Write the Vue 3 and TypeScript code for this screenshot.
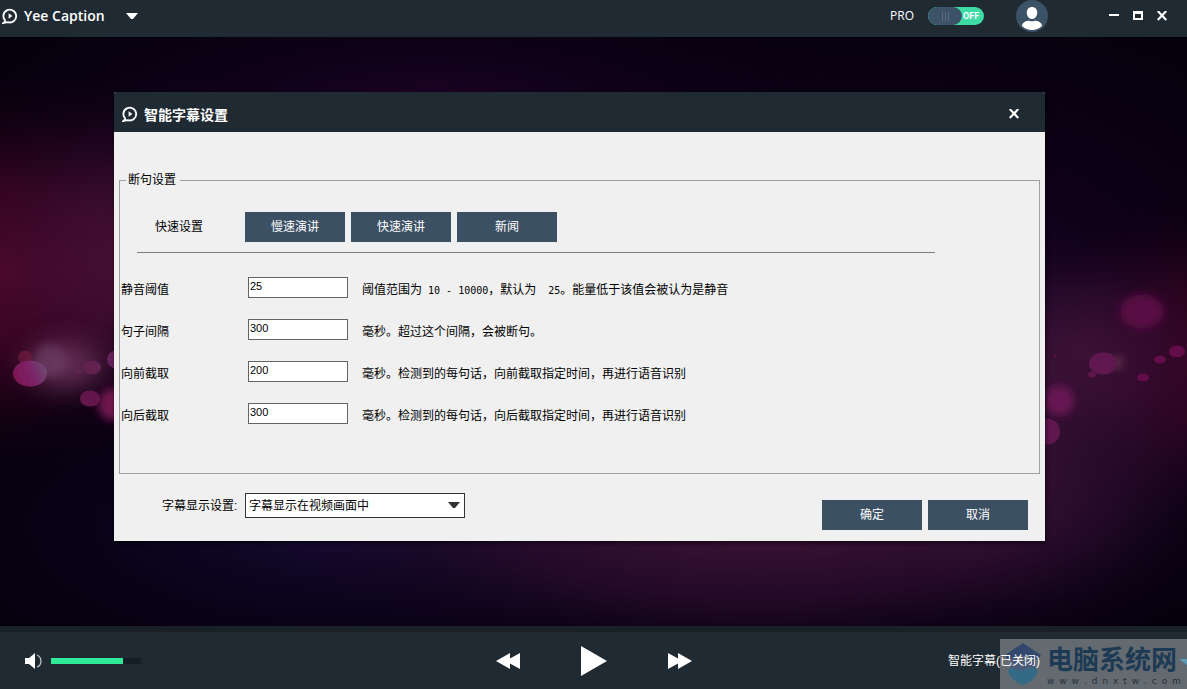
<script setup lang="ts">
import { ref } from 'vue'

interface Part {
  text: string
  mono?: boolean
}

interface Setting {
  id: string
  label: string
  value: string
  hint: Part[]
}

const presets = ['慢速演讲', '快速演讲', '新闻']

const settings = ref<Setting[]>([
  {
    id: 'silence',
    label: '静音阈值',
    value: '25',
    hint: [
      { text: '阈值范围为' },
      { text: ' 10 - 10000', mono: true },
      { text: '，默认为' },
      { text: '  25', mono: true },
      { text: '。能量低于该值会被认为是静音' },
    ],
  },
  { id: 'gap', label: '句子间隔', value: '300', hint: [{ text: '毫秒。超过这个间隔，会被断句。' }] },
  {
    id: 'before',
    label: '向前截取',
    value: '200',
    hint: [{ text: '毫秒。检测到的每句话，向前截取指定时间，再进行语音识别' }],
  },
  {
    id: 'after',
    label: '向后截取',
    value: '300',
    hint: [{ text: '毫秒。检测到的每句话，向后截取指定时间，再进行语音识别' }],
  },
])

const volume = ref(80)
const pro = ref(false)
const siteLetters = 'www.dnxtw.com'.split('')
</script>

<template>
  <div class="app">
    <header class="topbar">
      <svg class="logo" viewBox="0 0 16 16" aria-hidden="true">
        <path d="M3.6 12.9A6.4 6.4 0 1 1 6 14.2L1.4 15 3.6 12.9" />
        <path class="solid" d="M6.6 5.3 10.4 8l-3.8 2.7z" />
      </svg>
      <h1>Yee Caption</h1>
      <button class="bare menu" type="button" aria-label="Menu">
        <svg width="12" height="6" viewBox="0 0 12 6"><path d="M0 0h12L7 6H5z" fill="#fff" /></svg>
      </button>
      <label class="pro">
        <span>PRO</span>
        <span class="switch">
          <input v-model="pro" type="checkbox" role="switch" />
          <span class="knob"><i></i><i></i><i></i></span>
          <span class="state">OFF</span>
        </span>
      </label>
      <button class="bare avatar" type="button" aria-label="Account">
        <svg width="32" height="32" viewBox="0 0 32 32">
          <circle cx="16" cy="16" r="16" fill="#3c5267" />
          <path d="M16 7c3.400 0 5.200 2.400 5.200 5.500 0 3.600-2.100 6.500-5.200 6.500s-5.200-2.900-5.200-6.500c0-3.100 1.800-5.500 5.200-5.500z" fill="#fff" />
          <path d="M6 26c0-3.200 3.500-5.300 7-5.300 1.900.8 4.100.8 6 0 3.500 0 7 2.100 7 5.300-2.700 2.800-6.100 4-10 4s-7.300-1.200-10-4z" fill="#fff" />
        </svg>
      </button>
      <div class="window-buttons">
        <button class="bare" type="button" aria-label="Minimize">
          <svg width="10" height="10" viewBox="0 0 10 10"><path d="M0 3h10v2H0z" fill="#fff" /></svg>
        </button>
        <button class="bare" type="button" aria-label="Maximize">
          <svg width="10" height="10" viewBox="0 0 10 10"><path d="M0 0h10v9H0zM2 3v4h6V3z" fill="#fff" fill-rule="evenodd" /></svg>
        </button>
        <button class="bare" type="button" aria-label="Close">
          <svg width="10" height="10" viewBox="0 0 10 10"><path d="M.7 0l8.600 9M9.300 0L.7 9" stroke="#fff" stroke-width="2.200" /></svg>
        </button>
      </div>
    </header>

    <main class="stage">
      <svg class="backdrop" viewBox="0 0 1187 590" preserveAspectRatio="xMidYMid slice" aria-hidden="true">
        <defs>
          <radialGradient id="crimson"><stop offset="0" stop-color="#50082c" /><stop offset=".4" stop-color="#480628" stop-opacity=".75" /><stop offset=".75" stop-color="#340420" stop-opacity=".25" /><stop offset="1" stop-color="#200010" stop-opacity="0" /></radialGradient>
          <radialGradient id="plum"><stop offset="0" stop-color="#541c44" /><stop offset=".5" stop-color="#3c123a" stop-opacity=".65" /><stop offset=".8" stop-color="#260a2c" stop-opacity=".2" /><stop offset="1" stop-color="#1a0628" stop-opacity="0" /></radialGradient>
          <radialGradient id="indigo"><stop offset="0" stop-color="#160a34" /><stop offset="1" stop-color="#0a0418" stop-opacity="0" /></radialGradient>
          <radialGradient id="haze"><stop offset="0" stop-color="#20042a" /><stop offset="1" stop-color="#0c0014" stop-opacity="0" /></radialGradient>
          <linearGradient id="bubble" x1="0" y1=".6" x2="1" y2=".3"><stop offset="0" stop-color="#7c1450" /><stop offset=".55" stop-color="#7c2468" /><stop offset="1" stop-color="#6c4c70" /></linearGradient>
          <filter id="edge" x="-20%" y="-20%" width="140%" height="140%"><feGaussianBlur stdDeviation=".6" /></filter>
          <filter id="soft" x="-50%" y="-50%" width="200%" height="200%"><feGaussianBlur stdDeviation="4" /></filter>
          <filter id="softer" x="-100%" y="-100%" width="300%" height="300%"><feGaussianBlur stdDeviation="14" /></filter>
        </defs>
        <rect width="1187" height="590" fill="#05000e" />
        <ellipse cx="430" cy="80" rx="480" ry="150" fill="url(#haze)" />
        <ellipse cx="900" cy="250" rx="500" ry="300" fill="url(#haze)" />
        <ellipse cx="0" cy="235" rx="330" ry="200" fill="url(#crimson)" />
        <ellipse cx="150" cy="220" rx="190" ry="190" fill="url(#plum)" opacity=".6" />
        <ellipse cx="1187" cy="325" rx="150" ry="170" fill="url(#crimson)" opacity=".7" />
        <ellipse cx="1080" cy="310" rx="140" ry="120" fill="url(#plum)" opacity=".6" />
        <ellipse cx="1020" cy="400" rx="230" ry="210" fill="url(#plum)" opacity=".65" />
        <ellipse cx="330" cy="490" rx="420" ry="170" fill="url(#indigo)" />
        <ellipse cx="760" cy="480" rx="520" ry="170" fill="url(#plum)" opacity=".8" />
        <ellipse cx="64" cy="328" rx="36" ry="22" fill="#80436e" opacity=".7" filter="url(#softer)" />
        <circle cx="50" cy="324" r="16" fill="#71456b" opacity=".55" filter="url(#soft)" />
        <g filter="url(#edge)">
          <circle cx="25" cy="321" r="7" fill="#6e1840" opacity=".7" />
          <ellipse cx="30" cy="337" rx="17" ry="13" fill="url(#bubble)" />
          <ellipse cx="92" cy="331" rx="9" ry="7" fill="#622250" />
          <circle cx="79" cy="335" r="2" fill="#622250" />
          <ellipse cx="90" cy="362" rx="10" ry="8" fill="#64184c" />
          <circle cx="116" cy="323" r="9" fill="#64245c" />
        </g>
        <circle cx="114" cy="368" r="16" fill="#701850" filter="url(#soft)" />
        <ellipse cx="1142" cy="275" rx="22" ry="17" fill="#5a0b44" filter="url(#soft)" />
        <circle cx="1117" cy="326" r="6" fill="#65304f" filter="url(#soft)" />
        <g filter="url(#edge)">
          <ellipse cx="1103" cy="327" rx="14" ry="11" fill="#601850" />
          <ellipse cx="1092" cy="338" rx="4" ry="3" fill="#601448" />
          <ellipse cx="1143" cy="341" rx="6" ry="4" fill="#620a48" />
          <ellipse cx="1160" cy="323" rx="6" ry="4" fill="#620a48" />
          <ellipse cx="1177" cy="315" rx="8" ry="6" fill="#620a48" />
          <circle cx="1055" cy="320" r="1" fill="#701850" />
          <circle cx="1047" cy="395" r="13" fill="#601850" />
        </g>
        <circle cx="1059" cy="364" r="15" fill="#681752" filter="url(#soft)" />
      </svg>

      <section class="dialog" role="dialog" aria-labelledby="dialog-title">
        <header class="dialog-head">
          <svg class="logo" viewBox="0 0 16 16" aria-hidden="true">
            <path d="M3.6 12.9A6.4 6.4 0 1 1 6 14.2L1.4 15 3.6 12.9" />
            <path class="solid" d="M6.6 5.3 10.4 8l-3.8 2.700z" />
          </svg>
          <h2 id="dialog-title">智能字幕设置</h2>
          <button class="bare" type="button" aria-label="关闭">
            <svg width="10" height="10" viewBox="0 0 10 10"><path d="M.7 0l8.600 9M9.300 0L.7 9" stroke="#fff" stroke-width="2.200" /></svg>
          </button>
        </header>

        <form class="dialog-body" @submit.prevent>
          <fieldset>
            <legend>断句设置</legend>
            <div class="presets">
              <span>快速设置</span>
              <button v-for="p in presets" :key="p" class="solid-button" type="button">{{ p }}</button>
            </div>
            <hr />
            <div class="rows">
              <div v-for="s in settings" :key="s.id" class="row">
                <label :for="s.id">{{ s.label }}</label>
                <input :id="s.id" v-model="s.value" type="text" />
                <p><span v-for="(h, i) in s.hint" :key="i" :class="{ mono: h.mono }">{{ h.text }}</span></p>
              </div>
            </div>
          </fieldset>

          <div class="actions">
            <div class="display">
              <label for="display">字幕显示设置:</label>
              <div class="select">
                <select id="display">
                  <option>字幕显示在视频画面中</option>
                </select>
                <svg width="12" height="6" viewBox="0 0 12 6" aria-hidden="true"><path d="M0 0h12L7 6H5z" fill="#333" /></svg>
              </div>
            </div>
            <div class="confirm">
              <button class="solid-button" type="submit">确定</button>
              <button class="solid-button" type="button">取消</button>
            </div>
          </div>
        </form>
      </section>
    </main>

    <footer class="player">
      <div class="volume">
        <svg width="18" height="16" viewBox="0 0 18 16" aria-hidden="true">
          <path d="M0 5h4l6-5v16l-6-5H0z" fill="#fff" />
          <path d="M12 2c5.300 2.500 5.300 10 0 12" fill="none" stroke="#b9c0c6" stroke-width="1.300" />
        </svg>
        <input
          v-model.number="volume"
          type="range"
          min="0"
          max="100"
          aria-label="Volume"
          :style="{ '--level': volume + '%' }"
        />
      </div>
      <div class="transport">
        <button class="bare" type="button" aria-label="Rewind">
          <svg width="24" height="16" viewBox="0 0 24 16"><path d="M0 8L14 0v5.500L24 0v16L14 10.500V16z" fill="#fff" /></svg>
        </button>
        <button class="bare" type="button" aria-label="Play">
          <svg width="26" height="30" viewBox="0 0 26 30"><path d="M0 0l26 15L0 30z" fill="#fff" /></svg>
        </button>
        <button class="bare" type="button" aria-label="Forward">
          <svg width="24" height="16" viewBox="0 0 24 16"><path d="M24 8L10 0v5.500L0 0v16l10-5.500V16z" fill="#fff" /></svg>
        </button>
      </div>
      <button class="bare caption" type="button">智能字幕(已关闭)</button>
      <div class="badge">
        <svg width="36" height="42" viewBox="0 0 36 42" aria-hidden="true">
          <path d="M18 0l18 12-3 5-15-4-15 4-3-5z" fill="#28406f" />
          <path d="M5 16l13-4 13 4v11H5z" fill="#47577a" />
          <path d="M12 13h5v4h-5zM19 13h5v4h-5z" fill="#7d8794" />
          <path d="M3 27c5-5 10 2 15 0s10-3 15 0c-1 7-7 12-15 15C10 39 4 34 3 27z" fill="#2a6b8c" />
        </svg>
        <div class="badge-text">
          <strong>电脑系统网</strong>
          <div class="site"><span v-for="(c, i) in siteLetters" :key="i">{{ c }}</span></div>
        </div>
        <svg class="more" width="8" height="6" viewBox="0 0 8 6" aria-hidden="true"><path d="M0 0h8v6z" fill="#5f9bb5" /></svg>
      </div>
    </footer>
  </div>
</template>

<style>
body {
  margin: 0;
  background: #05000e;
}
</style>

<style scoped>
.app {
  min-height: 100vh;
  display: flex;
  flex-direction: column;
  overflow: hidden;
  font: 12px/18px "Liberation Sans", "Noto Sans CJK SC", sans-serif;
  color: #fff;
}
.app *,
.app {
  box-sizing: border-box;
}
h1,
h2,
p {
  margin: 0;
}
svg {
  display: block;
}
.bare {
  padding: 0;
  border: 0;
  background: none;
  color: inherit;
  font: inherit;
}
.logo {
  width: 16px;
  height: 16px;
  fill: none;
  stroke: #fff;
  stroke-width: 1.800;
}
.logo .solid {
  fill: #fff;
  stroke: none;
}

.topbar {
  display: flex;
  align-items: center;
  padding: 0 20px 5px 2px;
  background: #202a33;
}
.topbar h1 {
  margin-left: 6px;
  font: 600 14px/32px "Open Sans", sans-serif;
}
.menu {
  margin-left: 21px;
}
.pro {
  display: flex;
  align-items: center;
  gap: 14px;
  margin-left: auto;
  font-family: "Open Sans", sans-serif;
}
.switch {
  position: relative;
  display: flex;
  align-items: center;
  width: 56px;
  height: 18px;
  border-radius: 9px;
  overflow: hidden;
  background: #3edba5;
}
.switch input {
  position: absolute;
  inset: 0;
  margin: 0;
  opacity: 0;
}
.knob {
  display: flex;
  align-items: center;
  justify-content: center;
  gap: 2px;
  width: 34px;
  height: 18px;
  border-radius: 9px;
  background: #3c5267;
}
.knob i {
  width: 1px;
  height: 9px;
  background: #566d85;
}
.state {
  margin-left: 1px;
  font: 700 9px/18px Roboto, sans-serif;
}
.avatar {
  margin-left: 32px;
}
.window-buttons {
  display: flex;
  align-items: center;
  gap: 14px;
  margin-left: 61px;
}

.stage {
  position: relative;
  flex: 1;
  padding: 55px 142px 85px 114px;
}
.backdrop {
  position: absolute;
  inset: 0;
  width: 100%;
  height: 100%;
}
.dialog {
  position: relative;
  border-radius: 2px 2px 0 0;
  background: #f0f0f0;
  color: #000;
  box-shadow: 1px 2px 4px rgba(0, 0, 0, 0.6);
}
.dialog-head {
  display: flex;
  align-items: center;
  height: 40px;
  padding: 4px 26px 0 8px;
  border-radius: 2px 2px 0 0;
  background: #202a33;
  color: #fff;
}
.dialog-head h2 {
  margin-left: 6px;
  font: 700 14px/20px "Noto Sans CJK SC", sans-serif;
}
.dialog-head .bare {
  margin-left: auto;
}
.dialog-body {
  padding: 40px 5px 11px;
}
fieldset {
  min-width: 0;
  margin: 0;
  padding: 24px 0 48px;
  border: 1px solid #a0a0a0;
}
legend {
  margin-left: 6px;
  padding: 0 4px 0 2px;
  line-height: 16px;
}
.presets {
  display: flex;
  align-items: center;
  gap: 6px;
  padding-left: 35px;
}
.presets span {
  width: 84px;
}
.solid-button {
  width: 100px;
  height: 30px;
  padding: 0;
  border: 0;
  background: #3c5064;
  color: #fff;
  font: inherit;
}
hr {
  height: 1px;
  margin: 10px 104px 24px 17px;
  border: 0;
  background: #7c7c7c;
}
.rows {
  display: grid;
  gap: 20px;
}
.row {
  display: grid;
  grid-template-columns: 127px 100px 1fr;
  align-items: start;
  padding-left: 1px;
}
.row label,
.row p {
  padding-top: 4px;
}
.row p {
  padding-left: 14px;
  white-space: pre-wrap;
}
.row input {
  width: 100%;
  height: 21px;
  padding: 0 1px 4px;
  border: 1px solid #646464;
  border-radius: 0;
  background: #fff;
  color: #000;
  font: 11px/16px "Liberation Sans", sans-serif;
}
.mono {
  font-family: "DejaVu Sans Mono", monospace;
  font-size: 10px;
  line-height: 10px;
}
.actions {
  display: flex;
  justify-content: space-between;
  padding: 19px 12px 0 43px;
}
.display {
  display: flex;
  align-items: center;
  align-self: flex-start;
  gap: 5px;
}
.display label {
  width: 78px;
  white-space: nowrap;
}
.select {
  position: relative;
}
.select select {
  display: block;
  width: 220px;
  height: 25px;
  padding: 0 20px 0 3px;
  border: 1px solid #333;
  border-radius: 0;
  appearance: none;
  background: #fff;
  color: #000;
  font: inherit;
}
.select svg {
  position: absolute;
  top: 9px;
  right: 5px;
  pointer-events: none;
}
.confirm {
  display: flex;
  gap: 6px;
  padding-top: 7px;
}

.player {
  position: relative;
  display: grid;
  grid-template-columns: 1fr auto 1fr;
  align-items: center;
  height: 63px;
  padding: 0 25px;
  border-top: 6px solid #1a2027;
  background: #202a33;
}
.volume {
  display: flex;
  align-items: center;
  gap: 8px;
}
.volume input {
  width: 90px;
  height: 6px;
  margin: 0;
  appearance: none;
  background: linear-gradient(to right, #2eea99 var(--level), #161d24 var(--level));
}
.volume input::-webkit-slider-thumb {
  appearance: none;
  width: 0;
  height: 6px;
}
.transport {
  display: flex;
  align-items: center;
  gap: 61px;
}
.caption {
  position: relative;
  z-index: 1;
  justify-self: end;
  margin-right: 122px;
  white-space: nowrap;
}
.badge {
  position: absolute;
  right: 0;
  bottom: 0;
  display: flex;
  align-items: center;
  width: 187px;
  height: 50px;
  padding-left: 5px;
  background: rgba(255, 255, 255, 0.3);
}
.badge > svg:first-child {
  opacity: 0.8;
}
.badge-text {
  width: 134px;
  margin-left: 6px;
  color: #1d3a55;
}
.badge-text strong {
  display: block;
  font: 700 26px/34px "Noto Sans CJK SC", sans-serif;
}
.site {
  display: flex;
  justify-content: space-between;
  color: #27323c;
  font: 9px/12px "DejaVu Sans", sans-serif;
}
.more {
  position: absolute;
  top: 20px;
  right: 0;
}
</style>
